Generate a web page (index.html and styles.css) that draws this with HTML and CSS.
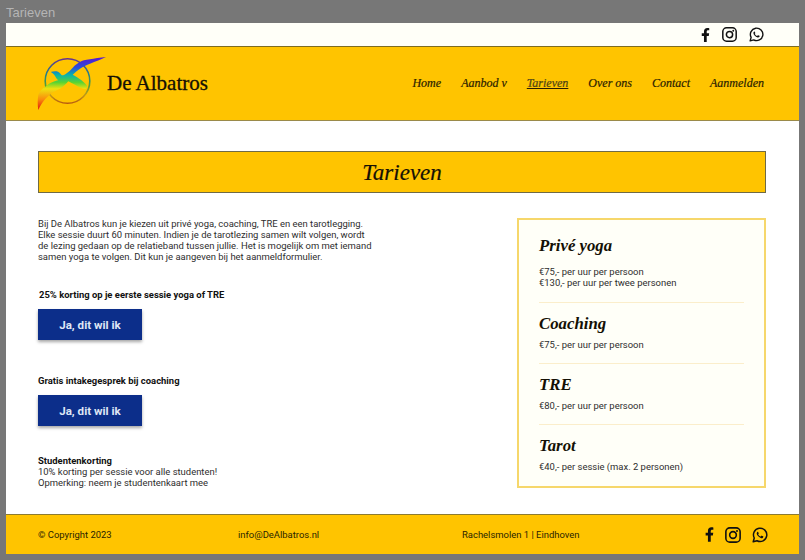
FILE: index.html
```html
<!DOCTYPE html>
<html lang="nl">
<head>
    <meta charset="UTF-8">
    <meta name="viewport" content="width=device-width, initial-scale=1.0">
    <title>Tarieven</title>
    <link rel="stylesheet" href="styles.css">
</head>
<body>
    <svg class="defs" width="0" height="0">
        <defs>
            <linearGradient id="rainbow" gradientUnits="userSpaceOnUse" x1="0" y1="3" x2="0" y2="56">
                <stop offset="0" stop-color="#5a14d0"/>
                <stop offset="0.2" stop-color="#2a4fd8"/>
                <stop offset="0.34" stop-color="#08b4ac"/>
                <stop offset="0.48" stop-color="#5ad430"/>
                <stop offset="0.6" stop-color="#f0e010"/>
                <stop offset="0.8" stop-color="#fa8c0c"/>
                <stop offset="1" stop-color="#e0140f"/>
            </linearGradient>
            <linearGradient id="ring" gradientUnits="userSpaceOnUse" x1="0" y1="4" x2="0" y2="50">
                <stop offset="0" stop-color="#6a2f90"/>
                <stop offset="0.35" stop-color="#1f7f8c"/>
                <stop offset="0.6" stop-color="#4f9f3c"/>
                <stop offset="0.8" stop-color="#c09a18"/>
                <stop offset="1" stop-color="#b8560f"/>
            </linearGradient>
            <symbol id="icon-fb" viewBox="0 0 320 512">
                <path d="M279.14 288l14.22-92.66h-88.91v-60.13c0-25.35 12.42-50.06 52.24-50.06h40.42V6.26S260.43 0 225.36 0c-73.22 0-121.08 44.38-121.08 124.72v70.62H22.89V288h81.39v224h100.17V288z"/>
            </symbol>
            <symbol id="icon-ig" viewBox="0 0 24 24">
                <rect x="1.300" y="1.300" width="21.400" height="21.400" rx="6" fill="none" stroke="currentColor" stroke-width="2.400"/>
                <circle cx="12" cy="12" r="5" fill="none" stroke="currentColor" stroke-width="2.400"/>
                <circle cx="18" cy="6" r="1.500"/>
            </symbol>
            <symbol id="icon-wa" viewBox="0 0 24 24">
                <path d="M1.800 22.200l1.600-5.700a10 10 0 1 1 4.100 4.100z" fill="none" stroke="currentColor" stroke-width="2.200" stroke-linejoin="round"/>
                <path d="M9 7c-.4 0-.8.1-1.100.5-.5.6-.9 1.300-.9 2.200 0 1.200.8 2.500 1.900 3.800 1.400 1.600 3 2.700 4.900 3.200 1 .2 1.900 0 2.600-.7.4-.4.600-1 .6-1.600 0-.2-.1-.3-.3-.4l-2.100-1c-.2-.1-.4-.1-.5.1l-.9 1.100c-.1.2-.3.2-.5.1-1.500-.6-2.600-1.600-3.400-3-.1-.2-.1-.3.1-.5l.6-.8c.1-.2.1-.3.1-.5l-.9-2.100c-.1-.2-.2-.3-.4-.3z"/>
            </symbol>
        </defs>
    </svg>

    <div class="window-title">Tarieven</div>

    <div class="page">
        <div class="topbar">
            <div class="social">
                <svg class="icon icon-f"><use href="#icon-fb"/></svg>
                <svg class="icon"><use href="#icon-ig"/></svg>
                <svg class="icon"><use href="#icon-wa"/></svg>
            </div>
        </div>

        <header class="site-header">
            <a class="brand" href="#">
                <svg class="logo" viewBox="0 0 71 60" width="71" height="60">
                    <circle cx="31.500" cy="27" r="22.300" fill="none" stroke="url(#ring)" stroke-width="1.600"/>
                    <path fill="url(#rainbow)" d="M70 3C64 3.500 58 4.500 54 5.300 49 6 46 6.500 44 8 41 9.500 39 11 37 13.500 35 15.500 33.500 17.500 31 19 29 20.500 27.500 21.500 25.700 21.300 24 19 22.500 17.500 20.700 17.300 18.500 17 16.500 17.300 14.700 18 16.500 19 18 20 19 22 20 24 21 25.300 22.300 26.300 19 27 14 28.500 9 33 6 34.800 3 38 2.300 41 1.500 46 1.500 51 2.300 56 4 52 6 49 8 46.500 10 44 12 42.500 14.500 40 18 37.500 21 36.500 24.500 34.500 27.500 32.500 30 30 32.300 27.300 34.500 28.300 36.500 29.500 39 30.700 42.500 32.700 45.500 34.500 49 35.300 50.800 35.300 51.500 33 50.700 31.300 48.500 29 46.500 27 44 25.300 41.500 23.500 39 22 36.700 20.700 39 18.500 41.500 16.500 44 14.700 47 12.800 50.500 11 54 9.700 59.500 7.500 65 5.500 70 3z"/>
                </svg>
                <span class="brand-name">De Albatros</span>
            </a>
            <nav class="main-nav">
                <a href="#">Home</a>
                <a href="#">Aanbod v</a>
                <a href="#" class="active">Tarieven</a>
                <a href="#">Over ons</a>
                <a href="#">Contact</a>
                <a href="#">Aanmelden</a>
            </nav>
        </header>

        <main class="content">
            <h1 class="page-title">Tarieven</h1>

            <div class="columns">
                <section class="intro">
                    <p class="lead">Bij De Albatros kun je kiezen uit privé yoga, coaching, TRE en een tarotlegging.<br>
                    Elke sessie duurt 60 minuten. Indien je de tarotlezing samen wilt volgen, wordt<br>
                    de lezing gedaan op de relatieband tussen jullie. Het is mogelijk om met iemand<br>
                    samen yoga te volgen. Dit kun je aangeven bij het aanmeldformulier.</p>

                    <p class="offer offer-first">25% korting op je eerste sessie yoga of TRE</p>
                    <a class="btn" href="#">Ja, dit wil ik</a>

                    <p class="offer offer-second">Gratis intakegesprek bij coaching</p>
                    <a class="btn" href="#">Ja, dit wil ik</a>

                    <p class="student"><strong>Studentenkorting</strong><br>
                    10% korting per sessie voor alle studenten!<br>
                    Opmerking: neem je studentenkaart mee</p>
                </section>

                <aside class="prices">
                    <div class="price-item">
                        <h2>Privé yoga</h2>
                        <p>€75,- per uur per persoon<br>€130,- per uur per twee personen</p>
                    </div>
                    <div class="price-item">
                        <h2>Coaching</h2>
                        <p>€75,- per uur per persoon</p>
                    </div>
                    <div class="price-item">
                        <h2>TRE</h2>
                        <p>€80,- per uur per persoon</p>
                    </div>
                    <div class="price-item">
                        <h2>Tarot</h2>
                        <p>€40,- per sessie (max. 2 personen)</p>
                    </div>
                </aside>
            </div>
        </main>

        <footer class="site-footer">
            <span class="foot-copy">© Copyright 2023</span>
            <span class="foot-mail">info@DeAlbatros.nl</span>
            <span class="foot-address">Rachelsmolen 1 | Eindhoven</span>
            <div class="social">
                <svg class="icon icon-f"><use href="#icon-fb"/></svg>
                <svg class="icon"><use href="#icon-ig"/></svg>
                <svg class="icon"><use href="#icon-wa"/></svg>
            </div>
        </footer>
    </div>
</body>
</html>
```

FILE: styles.css
```css
body {
    margin: 0;
    height: 560px;
    overflow: hidden;
    background-color: #777777;
    font-family: 'Roboto', 'Liberation Sans', sans-serif;
    font-size: 9.450px;
    line-height: 11px;
    color: #2e2e2e;
}

.defs {
    display: block;
    height: 0;
}

a {
    color: inherit;
    text-decoration: none;
}

p {
    margin: 0;
}

.window-title {
    height: 23px;
    padding-left: 6px;
    font-family: 'Liberation Sans', sans-serif;
    font-size: 13px;
    line-height: 26px;
    color: #b5b5b5;
}

.page {
    margin: 0 6px;
    background-color: #ffffff;
}

/* Bovenbalk */
.topbar {
    display: flex;
    justify-content: flex-end;
    align-items: center;
    height: 23px;
    padding-right: 35px;
    background-color: #fffff8;
}

.social {
    display: flex;
    align-items: center;
    gap: 12px;
    color: #111111;
}

.icon {
    width: 15px;
    height: 15px;
    fill: currentColor;
}

.icon-f {
    width: 9px;
    height: 14px;
}

/* Header */
.site-header {
    display: flex;
    justify-content: space-between;
    align-items: center;
    height: 73px;
    padding: 0 35px 0 30px;
    background-color: #ffc400;
    border-top: 1px solid #7d6c22;
    border-bottom: 1px solid #9a8a4a;
}

.brand {
    display: flex;
    align-items: center;
}

.logo {
    display: block;
}

.brand-name {
    font-family: 'Liberation Serif', serif;
    font-size: 21px;
    color: #141005;
    -webkit-text-stroke: 0.3px #141005;
}

.main-nav {
    display: flex;
    gap: 20px;
    font-family: 'Liberation Serif', serif;
    font-style: italic;
    font-size: 12px;
    color: #2a1d00;
    -webkit-text-stroke: 0.2px #2a1d00;
}

.main-nav .active {
    color: #5a5222;
    text-decoration: underline;
}

/* Inhoud */
.content {
    height: 393px;
    padding: 30px 33px 0 32px;
    box-sizing: border-box;
}

.page-title {
    margin: 0 0 25px;
    height: 42px;
    box-sizing: border-box;
    background-color: #ffc400;
    border: 1px solid #6f6a45;
    font-family: 'Liberation Serif', serif;
    font-style: italic;
    font-weight: normal;
    font-size: 23px;
    line-height: 41px;
    text-align: center;
    color: #141005;
    -webkit-text-stroke: 0.2px #141005;
}

.columns {
    display: flex;
    justify-content: space-between;
    align-items: flex-start;
}

.intro {
    width: 360px;
}

.offer {
    font-weight: 700;
    color: #111111;
}

.offer-first {
    margin: 27px 0 9px 1px;
}

.offer-second {
    margin: 35px 0 9px;
}

.btn {
    display: block;
    width: 104px;
    height: 31px;
    background-color: #0c2e8a;
    color: #dfe6f5;
    font-size: 11.600px;
    font-weight: 700;
    line-height: 32px;
    text-align: center;
    box-shadow: 0 2px 3px rgba(0, 0, 0, 0.35);
}

.student {
    margin-top: 29px;
}

.student strong {
    color: #111111;
}

/* Prijzen */
.prices {
    width: 249px;
    height: 270px;
    box-sizing: border-box;
    padding: 0 20px;
    background-color: #fffff8;
    border: 2px solid #f6d76b;
}

.price-item {
    padding: 11px 0 13px;
    border-bottom: 1px solid #fbeecb;
}

.price-item:first-child {
    padding: 16px 0 14px;
}

.price-item:last-child {
    border-bottom: none;
}

.price-item h2 {
    margin: 0 0 5px;
    font-family: 'Liberation Serif', serif;
    font-style: italic;
    font-weight: 700;
    font-size: 16.800px;
    line-height: 20px;
    color: #141005;
}

.price-item:first-child h2 {
    margin-bottom: 10px;
}

/* Footer */
.site-footer {
    display: flex;
    align-items: center;
    height: 39px;
    padding: 0 31px 0 32px;
    background-color: #ffc400;
    border-top: 1px solid #8c7b30;
    color: #2a1f00;
}

.foot-copy {
    width: 200px;
}

.foot-mail {
    width: 224px;
}

.foot-address {
    flex: 1;
}

.site-footer .social {
    gap: 11px;
}

.site-footer .icon {
    width: 16px;
    height: 16px;
}

.site-footer .icon-f {
    width: 9px;
    height: 15px;
}
```
